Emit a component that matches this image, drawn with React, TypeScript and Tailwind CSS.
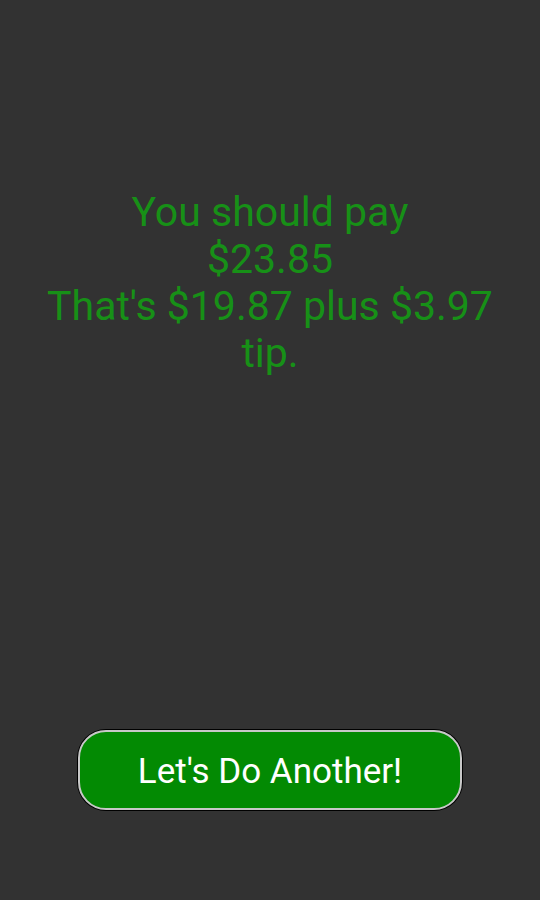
export default function App() {
    return (
        <main className="w-[540px] h-[900px] bg-[#323232] flex flex-col items-center font-['Roboto',sans-serif]">
            {/* Result */}
            <section className="pt-[189px] px-[40px] text-center text-[#179017] text-[41px] leading-[47px]">
                <p>You should pay</p>
                <p>$23.85</p>
                <p>That's $19.87 plus $3.97 tip.</p>
            </section>

            <div className="flex-1" />

            <button className="mb-[90px] w-[384px] h-[80px] pt-[4px] rounded-[28px] bg-[#038a03] border-2 border-[#c8c8c8] ring-1 ring-black text-white text-[35px]">
                Let's Do Another!
            </button>
        </main>
    );
}
